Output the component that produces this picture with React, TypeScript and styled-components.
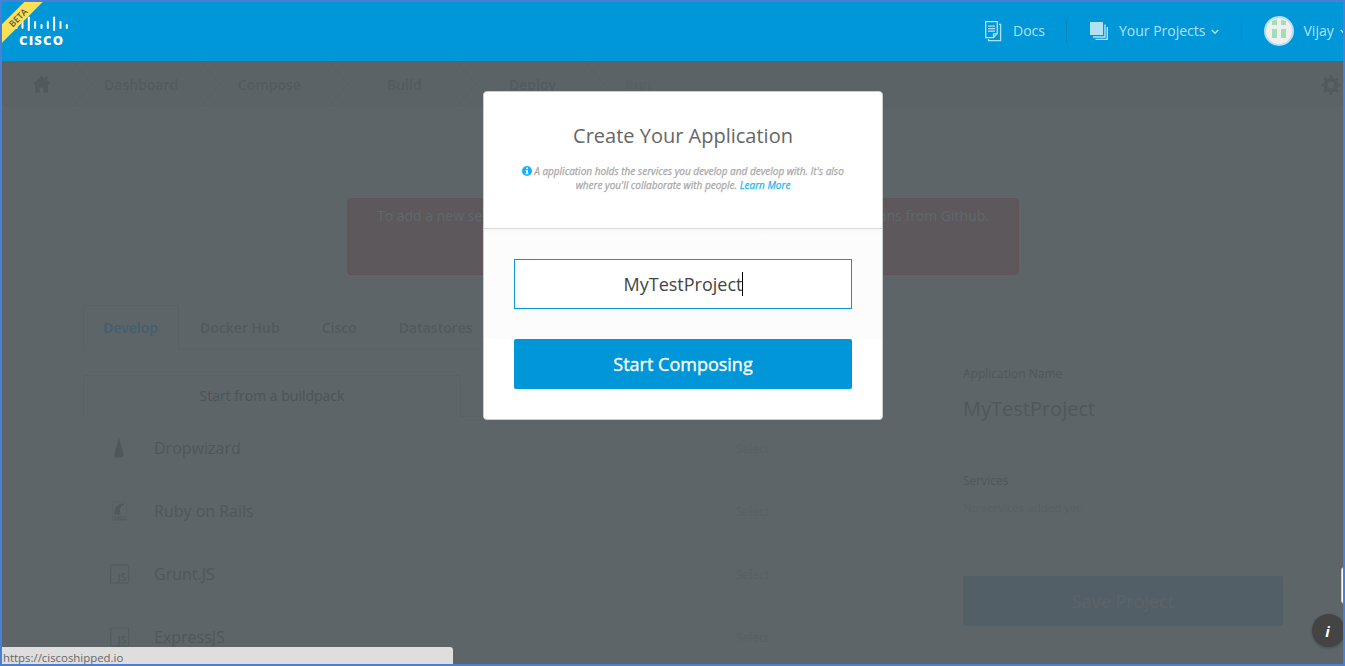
import React from "react";
import styled, { createGlobalStyle } from "styled-components";

const GlobalStyle = createGlobalStyle`
  * { box-sizing: border-box; }
  body { margin: 0; overflow: hidden; font-family: "Open Sans", "Noto Sans", sans-serif; }
`;

const Frame = styled.div`
  position: relative;
  width: 1345px;
  height: 666px;
  border: 2px solid #4a80d3;
  background: #5d6568;
  overflow: hidden;
`;

const Header = styled.header`
  display: flex;
  align-items: center;
  height: 59px;
  padding-bottom: 1px;
  background: #0097d9;
  color: #b4e0f4;
  font-size: 14px;
`;

const Brand = styled.div`
  display: flex;
  flex-direction: column;
  flex: none;
  width: 60px;
  margin-left: 13px;
  margin-right: 910px;
  padding-top: 1px;
`;

const BrandName = styled.span`
  height: 13px;
  margin: 2px 0 0 4px;
  font-size: 13px;
  line-height: 13px;
  font-weight: 800;
  letter-spacing: 1.2px;
  color: #fff;
`;

const Ribbon = styled.div`
  position: absolute;
  left: -29px;
  top: 9px;
  width: 90px;
  height: 13px;
  background: #ffe056;
  color: #5b5734;
  font-size: 9px;
  font-weight: 600;
  line-height: 13px;
  text-align: center;
  transform: rotate(-45deg);
`;

const HeaderLink = styled.a<{ $gap: number }>`
  display: flex;
  align-items: center;
  gap: ${(p) => p.$gap}px;
  flex: none;
  white-space: nowrap;
  span { padding-bottom: 2px; }
`;

const Separator = styled.i<{ $before: number; $after: number }>`
  flex: none;
  width: 1px;
  height: 24px;
  margin-left: ${(p) => p.$before}px;
  margin-right: ${(p) => p.$after}px;
  background: #0585be;
`;

const StepBar = styled.nav`
  display: flex;
  height: 46px;
  background: #5b6366;
`;

const HomeCell = styled.div`
  width: 71px;
  padding: 14px 0 0 31px;
`;

const Step = styled.div<{ $indent: number; $faint?: boolean }>`
  display: flex;
  width: 128px;
  color: ${(p) => (p.$faint ? "#586063" : "#545a5d")};
  font-size: 14px;
  font-weight: 600;
  line-height: 48px;
  span { margin-left: ${(p) => p.$indent - 20}px; }
`;

const StepArrow = styled.svg`
  flex: none;
  width: 20px;
  height: 46px;
`;

const SettingsCell = styled.div`
  margin: 14px 0 0 auto;
  padding-right: 2px;
`;

const Alert = styled.div`
  display: flex;
  justify-content: space-between;
  width: 672px;
  height: 77px;
  margin: 91px 0 0 345px;
  padding: 7px 29px 0 29px;
  border: 1px solid #61535a;
  border-radius: 4px;
  background: #5d585c;
  color: #5f686c;
  font-size: 14px;
  line-height: 20px;
`;

const Columns = styled.main`
  display: flex;
  margin-top: 30px;
  padding-left: 81px;
`;

const Catalog = styled.section`
  width: 748px;
`;

const Tabs = styled.div`
  display: flex;
  height: 45px;
`;

const Tab = styled.div<{ $active?: boolean }>`
  padding: 0 ${(p) => (p.$active ? "20px 0 19px" : "21px")};
  border: 1px solid ${(p) => (p.$active ? "#596164" : "transparent")};
  border-bottom-color: ${(p) => (p.$active ? "transparent" : "#596164")};
  border-width: ${(p) => (p.$active ? "1px" : "1px 0")};
  border-radius: ${(p) => (p.$active ? "3px 3px 0 0" : "0")};
  color: ${(p) => (p.$active ? "#435f70" : "#53595c")};
  font-size: 14px;
  font-weight: 600;
  line-height: 43px;
`;

const TabRest = styled.div`
  flex: 1;
  border-bottom: 1px solid #596164;
`;

const Sources = styled.div`
  display: flex;
  height: 42px;
  margin-top: 25px;
`;

const Source = styled.div`
  width: 378px;
  border: 1px solid #596164;
  border-bottom: 0;
  border-radius: 4px 4px 0 0;
  color: #4d5457;
  font-size: 14px;
  line-height: 40px;
  text-align: center;
`;

const Row = styled.div`
  display: flex;
  align-items: center;
  height: 63px;
  padding: 0 0 2px 26px;
  color: #50575a;
  font-size: 16px;
`;

const RowIcon = styled.div`
  display: flex;
  width: 22px;
  height: 22px;
  margin-right: 23px;
`;

const SelectButton = styled.div`
  width: 157px;
  height: 34px;
  margin-left: auto;
  border: 1px solid #5c6467;
  color: #596063;
  font-size: 12px;
  line-height: 34px;
  text-align: center;
`;

const Summary = styled.aside`
  width: 320px;
  margin-left: 132px;
  padding-top: 59px;
  color: #51575a;
`;

const Caption = styled.div<{ $faint?: boolean; $top?: number }>`
  margin-top: ${(p) => p.$top ?? 0}px;
  color: ${(p) => (p.$faint ? "#586063" : "#51575a")};
  font-size: ${(p) => (p.$faint ? 11.5 : 12)}px;
  line-height: 20px;
`;

const ProjectName = styled.div`
  margin-top: 10px;
  font-size: 20px;
  line-height: 30px;
`;

const SaveButton = styled.div`
  height: 50px;
  margin-top: 58px;
  border-radius: 2px;
  background: #535f66;
  color: #5a6469;
  font-size: 18px;
  font-weight: 500;
  -webkit-text-stroke: 0.3px currentColor;
  line-height: 51px;
  text-align: center;
`;

const Modal = styled.div`
  position: absolute;
  left: 481px;
  top: 89px;
  width: 400px;
  height: 329px;
  border: 1px solid #cbcdce;
  border-radius: 4px;
  background: #fff;
  overflow: hidden;
  text-align: center;
`;

const ModalHead = styled.div`
  height: 137px;
  padding-top: 28px;
  border-bottom: 1px solid #dadada;
`;

const Title = styled.h1`
  margin: 0;
  color: #666;
  font-size: 20px;
  font-weight: 400;
  line-height: 32px;
`;

const Hint = styled.p`
  margin: 12px 30px 0;
  color: #a8a8a8;
  font-size: 10px;
  font-style: italic;
  font-weight: 500;
  -webkit-text-stroke: 0.25px currentColor;
  line-height: 14px;
  white-space: nowrap;
  svg { vertical-align: -1px; margin-right: 2px; }
  a { color: #1fb5f5; }
`;

const ModalBody = styled.div`
  padding: 30px 30px 0;
  height: 191px;
  background: linear-gradient(#f8f8f8, #fcfcfc 5px, #fcfcfc 110px, #fff 110px);
`;

const NameField = styled.div`
  display: flex;
  align-items: center;
  justify-content: center;
  height: 50px;
  border: 1px solid #0b97d2;
  background: #fff;
  color: #444;
  font-size: 18px;
`;

const Caret = styled.i`
  width: 1px;
  height: 24px;
  margin-right: -1px;
  background: #000;
`;

const StartButton = styled.div`
  height: 50px;
  margin-top: 30px;
  border-radius: 2px;
  background: #0096d8;
  color: #fff;
  font-size: 18px;
  font-weight: 500;
  -webkit-text-stroke: 0.35px currentColor;
  line-height: 50px;
`;

const StatusBar = styled.div`
  position: absolute;
  left: 0;
  bottom: 0;
  width: 451px;
  height: 17px;
  padding-left: 1px;
  border-radius: 0 3px 0 0;
  background: #dedede;
  color: #666;
  font-size: 11.4px;
  line-height: 22px;
`;

const InfoBubble = styled.div`
  position: absolute;
  left: 1310px;
  top: 612px;
  width: 33px;
  height: 33px;
  border-radius: 50%;
  background: #444;
  box-shadow: 0 1px 3px rgba(0, 0, 0, 0.25);
  color: #fff;
  font: italic 700 15px/35px "Liberation Serif", serif;
  font-family: "Open Sans", sans-serif;
  text-align: center;
  padding-right: 2px;
`;

const SideHandle = styled.div`
  position: absolute;
  left: 1339px;
  top: 565px;
  width: 8px;
  height: 37px;
  border-left: 1px solid #c9cccd;
  border-radius: 4px;
  background: #fff;
`;

const CaretDown = styled.svg<{ $left: number }>`
  flex: none;
  margin: 2px 0 0 ${(p) => p.$left}px;
`;

const Chevron = ({ left }: { left: number }) => (
  <CaretDown $left={left} width="8" height="6" viewBox="0 0 8 6" fill="none" stroke="#b4e0f4" strokeWidth="1.4">
    <path d="M0.8 1 L4 4.2 L7.2 1" />
  </CaretDown>
);

const BARS = [
  [0, 8, 12], [6, 5, 12], [12.3, 0.5, 14], [18.6, 5, 12], [25, 8, 12],
  [31.3, 5, 12], [37.6, 0.5, 14], [44, 5, 12], [50.3, 8, 12],
];

const CiscoBars = () => (
  <svg width="56" height="16" viewBox="0 0 56 16" stroke="#fff" strokeWidth="2" strokeLinecap="round">
    {BARS.map(([x, a, b]) => (
      <line key={x} x1={x + 1.5} x2={x + 1.5} y1={a + 1} y2={b} />
    ))}
  </svg>
);

const DocsIcon = () => (
  <svg width="17" height="21" viewBox="0 0 17 21" fill="none" stroke="#b4e0f4" strokeWidth="1.3">
    <path d="M.7 .7H12.3V12.5L8.5 16.7H.7ZM8.5 16.5V12.8H12.2" />
    <path d="M3 5.2H10M3 7.7H10M3 10.2H10M14 3.3H15.6V19.6H3.5V18" />
  </svg>
);

const ProjectsIcon = () => (
  <svg width="18" height="18" viewBox="0 0 18 18" fill="none" stroke="#b4e0f4">
    <rect width="13" height="13" fill="#b4e0f4" stroke="none" />
    <path d="M15 2.5V15H3M17.3 5V17.4H5.5" strokeWidth="1.4" />
  </svg>
);

const Avatar = () => (
  <svg width="30" height="30" viewBox="0 0 30 30">
    <circle cx="15" cy="15" r="14" fill="#f0f0f0" stroke="#b9def2" strokeWidth="2" />
    <g fill="#a3dfb5">
      <path d="M8 5L13 3.4V9H8ZM17 3.4L22 5V9H17Z" />
      <rect x="8" y="13" width="5" height="9" />
      <rect x="17" y="13" width="5" height="9" />
    </g>
  </svg>
);

const HomeIcon = () => (
  <svg width="17" height="18" viewBox="0 0 17 18" fill="#52585b">
    <path d="M8.5 1L12 3.8V1.6H14.5V6L17 8.6L16 9.6L15 8.8V17.5H10.3V12.5H6.6V17.5H2V8.8L1 9.6L0 8.6Z" />
  </svg>
);

const GearIcon = () => (
  <svg width="20" height="20" viewBox="0 0 20 20" fill="none" stroke="#53595c">
    <circle cx="10" cy="10" r="5.4" strokeWidth="4" />
    <circle cx="10" cy="10" r="8.4" strokeWidth="2.3" strokeDasharray="2.7 3.897" strokeDashoffset="1.35" />
  </svg>
);

const ConeIcon = () => (
  <svg width="22" height="22" viewBox="0 0 22 22" fill="#50575a">
    <path d="M10 1L15 18C14.5 21.5 5.5 21.5 5 18Z" />
  </svg>
);

const RailsIcon = () => (
  <svg width="22" height="22" viewBox="0 0 22 22">
    <rect x="3.5" y="1.5" width="14" height="19" rx="1" fill="none" stroke="#586063" />
    <path d="M5 14.5C5 7 9 3 15.5 3.5L14.5 5.5C10.5 6 10.5 10 11.5 14.5Z" fill="#52595c" />
    <text x="10.5" y="19.7" fontSize="4.5" fontWeight="700" textAnchor="middle" fill="#52595c">RAILS</text>
  </svg>
);

const JsIcon = () => (
  <svg width="22" height="22" viewBox="0 0 22 22">
    <rect x="1.7" y="2" width="18" height="18" rx="1.5" fill="none" stroke="#545b5e" strokeWidth="1.2" />
    <text x="13" y="18" fontSize="10.5" fontWeight="700" textAnchor="middle" fill="#545b5e">JS</text>
  </svg>
);

const InfoIcon = () => (
  <svg width="10" height="10" viewBox="0 0 10 10">
    <circle cx="5" cy="5" r="5" fill="#12b2fb" />
    <path d="M4.2 1.6H5.9V3H4.2ZM3.6 4H5.9V7.2H6.5V8.2H3.5V7.2H4.2V5H3.6Z" fill="#fff" />
  </svg>
);

const STEPS = [
  { label: "Dashboard", indent: 31 },
  { label: "Compose", indent: 37 },
  { label: "Build", indent: 58 },
  { label: "Deploy", indent: 52 },
  { label: "Run", indent: 40, faint: true },
];

const BUILDPACKS = [
  { name: "Dropwizard", Icon: ConeIcon },
  { name: "Ruby on Rails", Icon: RailsIcon },
  { name: "Grunt.JS", Icon: JsIcon },
  { name: "ExpressJS", Icon: JsIcon },
];

export default function App() {
  return (
    <>
      <GlobalStyle />
      <Frame>
        <Header>
          <Brand>
            <CiscoBars />
            <BrandName>CISCO</BrandName>
          </Brand>
          <HeaderLink $gap={11}><DocsIcon /><span>Docs</span></HeaderLink>
          <Separator $before={21} $after={23} />
          <HeaderLink $gap={11}><ProjectsIcon /><span>Your Projects</span></HeaderLink>
          <Chevron left={5} />
          <Separator $before={22} $after={22} />
          <HeaderLink $gap={10}><Avatar /><span>Vijay</span></HeaderLink>
          <Chevron left={6} />
        </Header>
        <StepBar>
          <HomeCell><HomeIcon /></HomeCell>
          {STEPS.map((s) => (
            <Step key={s.label} $indent={s.indent} $faint={s.faint}>
              <StepArrow viewBox="0 0 20 46" fill="none" stroke="#586063">
                <path d="M0 0L19 23L0 46" />
              </StepArrow>
              <span>{s.label}</span>
            </Step>
          ))}
          <SettingsCell><GearIcon /></SettingsCell>
        </StepBar>
        <Alert>
          <span>To add a new service</span>
          <span>permissions from Github.</span>
        </Alert>
        <Columns>
          <Catalog>
            <Tabs>
              <Tab $active>Develop</Tab>
              <Tab>Docker Hub</Tab>
              <Tab>Cisco</Tab>
              <Tab>Datastores</Tab>
              <TabRest />
            </Tabs>
            <Sources>
              <Source>Start from a buildpack</Source>
              <TabRest />
            </Sources>
            {BUILDPACKS.map(({ name, Icon }) => (
              <Row key={name}>
                <RowIcon><Icon /></RowIcon>
                {name}
                <SelectButton>Select</SelectButton>
              </Row>
            ))}
          </Catalog>
          <Summary>
            <Caption>Application Name</Caption>
            <ProjectName>MyTestProject</ProjectName>
            <Caption $top={47}>Services</Caption>
            <Caption $top={7} $faint>No services added yet.</Caption>
            <SaveButton>Save Project</SaveButton>
          </Summary>
        </Columns>
        <Ribbon>BETA</Ribbon>
        <Modal>
          <ModalHead>
            <Title>Create Your Application</Title>
            <Hint>
              <InfoIcon />A application holds the services you develop and develop with. It's also
              <br />
              where you'll collaborate with people. <a>Learn More</a>
            </Hint>
          </ModalHead>
          <ModalBody>
            <NameField>MyTestProject<Caret /></NameField>
            <StartButton>Start Composing</StartButton>
          </ModalBody>
        </Modal>
        <StatusBar>https://ciscoshipped.io</StatusBar>
        <SideHandle />
        <InfoBubble>i</InfoBubble>
      </Frame>
    </>
  );
}
